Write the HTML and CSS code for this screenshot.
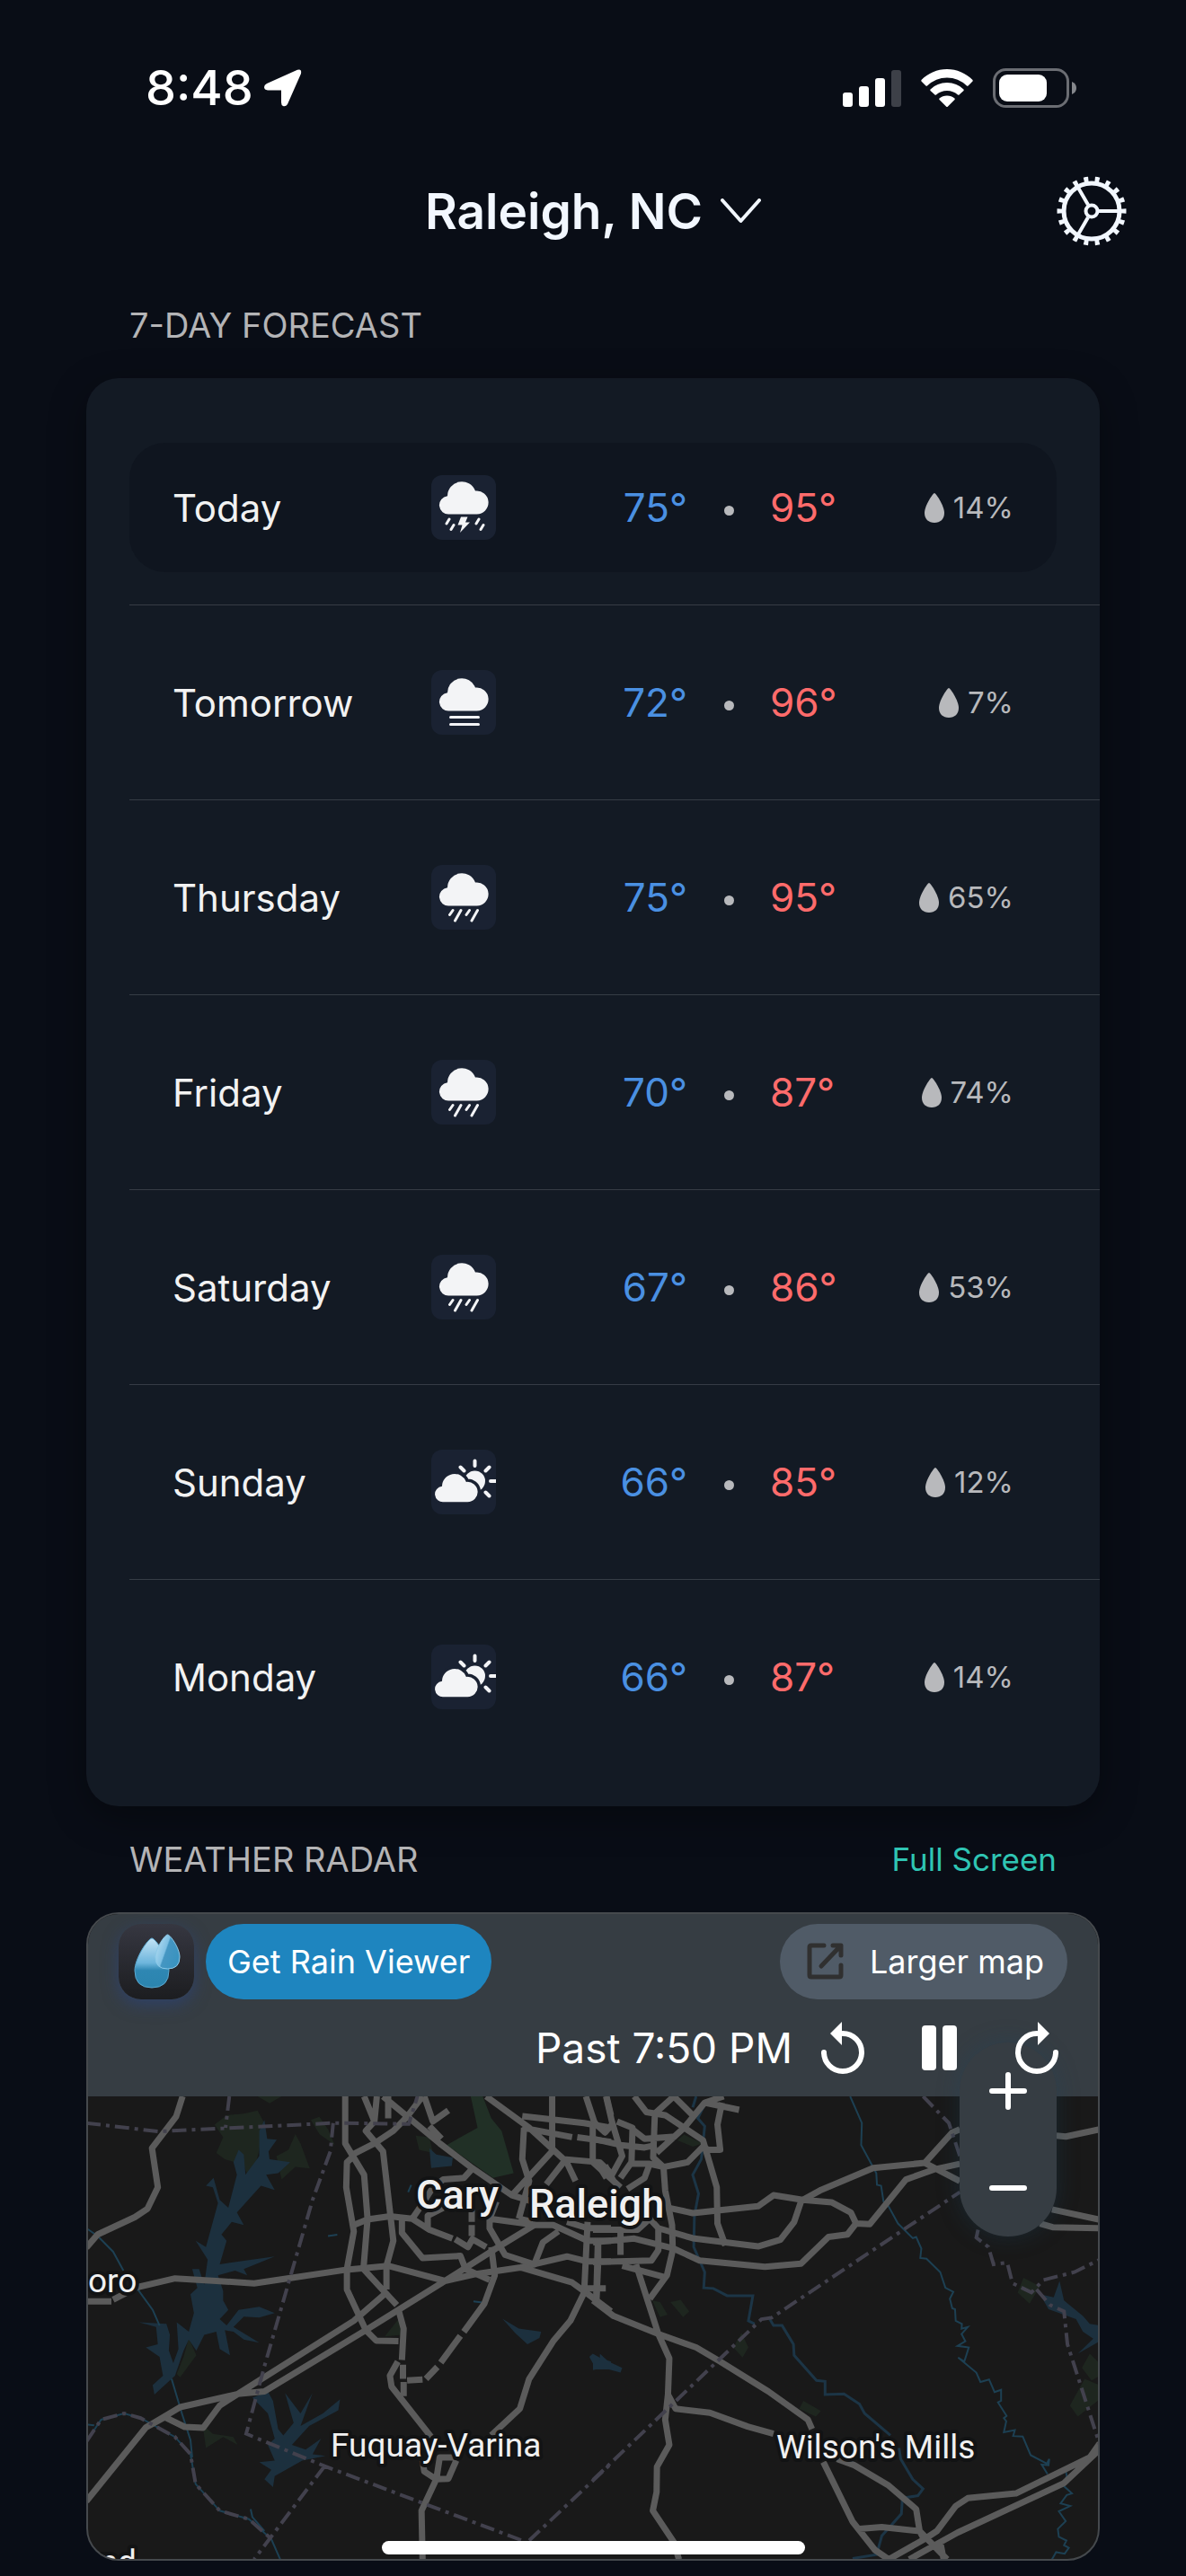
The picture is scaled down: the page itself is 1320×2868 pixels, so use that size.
FILE: index.html
```html
<!DOCTYPE html>
<html lang="en">
    <head>
        <meta charset="utf-8">
        <title>Weather</title>
        <meta name="viewport" content="width=device-width, initial-scale=1">
        <link rel="stylesheet" href="styles.css">
    </head>
    <body>
        <!-- shared shapes -->
        <svg class="defs" aria-hidden="true">
            <symbol id="cloud" viewBox="0 0 72 72">
                <path d="M20 43.5a10.2 10.2 0 0 1-2-20.3A16 16 0 0 1 49 17.6A13 13 0 1 1 50.5 43.5Z"/>
            </symbol>
            <symbol id="storm" viewBox="0 0 72 72">
                <use href="#cloud" width="72" height="72"/>
                <path class="line" d="M20 49l-3 5M25 55.500l-3 5M53 49l-3 5M58 55.500l-3 5"/>
                <path d="M33 46.500h7.500l-2.500 6h5L32 64l2.500-8.500H29.500Z"/>
            </symbol>
            <symbol id="fog" viewBox="0 0 72 72">
                <use href="#cloud" y="2" width="72" height="72"/>
                <path class="line" d="M21.500 52.500h31M21.500 60.500h31"/>
            </symbol>
            <symbol id="rain" viewBox="0 0 72 72">
                <use href="#cloud" y="2" width="72" height="72"/>
                <path class="line" d="M24 50.500l-3.500 5M33 50.500L26.500 62M42.500 50.500l-3.500 5M51.500 50.500L45 62"/>
            </symbol>
            <symbol id="partly" viewBox="0 0 72 72">
                <circle cx="48.500" cy="35" r="11.500"/>
                <path class="line thick" d="M48.500 12.500v5.500M60.500 23.500l4-4M36.500 23.500l-4-4M66 35h8M60.500 47.500l4 4"/>
                <g transform="translate(-3.700 20.800) scale(.87 .86)">
                    <path class="halo" d="M20 43.500a10.200 10.200 0 0 1-2-20.300A16 16 0 0 1 49 17.600A13 13 0 1 1 50.500 43.500Z"/>
                </g>
            </symbol>
            <symbol id="drop" viewBox="0 0 22 33">
                <path d="M11 0C12.500 0 22 14 22 22C22 29 17.500 33 11 33S0 29 0 22C0 14 9.500 0 11 0Z"/>
            </symbol>
        </svg>

        <div class="status-bar">
            <div class="clock">
                <span>8:48</span>
                <svg width="42" height="42" viewBox="0 0 42 42" fill="#fff"><path d="M37 .8Q42-1 41 5L26 39Q24 42 21 41Q19 40 19 37V23.500H4Q0 23 0 20Q0 17.500 3 16Z"/></svg>
            </div>
            <div class="indicators">
                <svg width="65" height="42" viewBox="0 0 65 42" fill="#fff">
                    <rect x="0" y="26" width="11" height="16" rx="3"/>
                    <rect x="18" y="19" width="11" height="23" rx="3"/>
                    <rect x="36" y="10" width="11" height="32" rx="3"/>
                    <rect x="54" y="1" width="11" height="41" rx="3" fill="#3d4048"/>
                </svg>
                <svg width="58" height="42" viewBox="0 0 58 42" fill="#fff">
                    <path d="M29 0C40 0 50 4.500 57.500 12Q58 13 57.500 13.500L52.500 18.500Q51.500 19 51 18.500Q41.500 9.500 29 9.500T7 18.500Q6.500 19 5.500 18.500L.5 13.500Q0 13 .5 12C8 4.500 18 0 29 0Z"/>
                    <path d="M29 15Q40 15 47.500 22.500Q48 23 47.500 24L42.500 28.500Q42 29 41 28.500Q36 24 29 24T17 28.500Q16 29 15.500 28.500L10.500 24Q10 23 10.500 22.500Q18 15 29 15Z"/>
                    <path d="M29 29.500Q34 29.500 37.500 32.500Q38 33.500 37.500 34L30 41.500Q29 42.500 28 41.500L20.500 34Q20 33.500 20.500 32.500Q24 29.500 29 29.500Z"/>
                </svg>
                <svg width="94" height="44" viewBox="0 0 94 44">
                    <rect x="1.500" y="1.500" width="82" height="41" rx="13" fill="none" stroke="#6b6d73" stroke-width="3"/>
                    <rect x="7" y="7" width="53" height="30" rx="9" fill="#fff"/>
                    <path d="M88 15Q93 17 93 22T88 29Z" fill="#85878c"/>
                </svg>
            </div>
        </div>

        <header class="top">
            <button class="location">
                Raleigh, NC
                <svg width="45" height="28" viewBox="0 0 45 28"><path d="M2 2l20.500 23L43 2" fill="none" stroke="#f2f7ff" stroke-width="4" stroke-linecap="round" stroke-linejoin="round"/></svg>
            </button>
            <button class="settings" aria-label="Settings">
                <svg width="78" height="78" viewBox="0 0 78 78" fill="none" stroke="#f2f7ff">
                    <circle cx="39" cy="39" r="31" stroke-width="5"/>
                    <circle cx="39" cy="39" r="35.500" stroke-width="6" pathLength="180" stroke-dasharray="4 6" stroke-dashoffset="2"/>
                    <circle cx="39" cy="39" r="6.500" stroke-width="4"/>
                    <path d="M47 39h22M35 32L24 13M35 46L24 65" stroke-width="4"/>
                </svg>
            </button>
        </header>

        <main>
            <div class="section-head">
                <h2>7-DAY FORECAST</h2>
            </div>
            <ul class="forecast">
                <li>
                    <div class="day today">
                        <span class="name">Today</span>
                        <svg class="icon"><use href="#storm"/></svg>
                        <span class="low">75°</span>
                        <span class="dot"></span>
                        <span class="high">95°</span>
                        <span class="chance"><svg><use href="#drop"/></svg>14%</span>
                    </div>
                </li>
                <li>
                    <div class="day">
                        <span class="name">Tomorrow</span>
                        <svg class="icon"><use href="#fog"/></svg>
                        <span class="low">72°</span>
                        <span class="dot"></span>
                        <span class="high">96°</span>
                        <span class="chance"><svg><use href="#drop"/></svg>7%</span>
                    </div>
                </li>
                <li>
                    <div class="day">
                        <span class="name">Thursday</span>
                        <svg class="icon"><use href="#rain"/></svg>
                        <span class="low">75°</span>
                        <span class="dot"></span>
                        <span class="high">95°</span>
                        <span class="chance"><svg><use href="#drop"/></svg>65%</span>
                    </div>
                </li>
                <li>
                    <div class="day">
                        <span class="name">Friday</span>
                        <svg class="icon"><use href="#rain"/></svg>
                        <span class="low">70°</span>
                        <span class="dot"></span>
                        <span class="high">87°</span>
                        <span class="chance"><svg><use href="#drop"/></svg>74%</span>
                    </div>
                </li>
                <li>
                    <div class="day">
                        <span class="name">Saturday</span>
                        <svg class="icon"><use href="#rain"/></svg>
                        <span class="low">67°</span>
                        <span class="dot"></span>
                        <span class="high">86°</span>
                        <span class="chance"><svg><use href="#drop"/></svg>53%</span>
                    </div>
                </li>
                <li>
                    <div class="day">
                        <span class="name">Sunday</span>
                        <svg class="icon"><use href="#partly"/></svg>
                        <span class="low">66°</span>
                        <span class="dot"></span>
                        <span class="high">85°</span>
                        <span class="chance"><svg><use href="#drop"/></svg>12%</span>
                    </div>
                </li>
                <li>
                    <div class="day">
                        <span class="name">Monday</span>
                        <svg class="icon"><use href="#partly"/></svg>
                        <span class="low">66°</span>
                        <span class="dot"></span>
                        <span class="high">87°</span>
                        <span class="chance"><svg><use href="#drop"/></svg>14%</span>
                    </div>
                </li>
            </ul>

            <div class="section-head">
                <h2>WEATHER RADAR</h2>
                <a class="full" href="#">Full Screen</a>
            </div>
            <div class="radar">
                <div class="radar-bar">
                    <div class="radar-links">
                        <svg class="logo" viewBox="0 0 84 84">
                            <defs>
                                <linearGradient id="tile" x2="0" y2="1"><stop offset="0" stop-color="#363741"/><stop offset="1" stop-color="#1c1d20"/></linearGradient>
                                <linearGradient id="water" x2="0" y2="1"><stop offset="0" stop-color="#c4e4f6"/><stop offset=".5" stop-color="#6db5dc"/><stop offset=".65" stop-color="#2e87b3"/><stop offset="1" stop-color="#2b84ae"/></linearGradient>
                                <linearGradient id="water2" x2="1" y2=".5"><stop offset="0" stop-color="#bfe2f5"/><stop offset=".5" stop-color="#7fc0e3"/><stop offset=".55" stop-color="#4596c2"/><stop offset="1" stop-color="#3a93c0"/></linearGradient>
                            </defs>
                            <rect width="84" height="84" rx="25" fill="url(#tile)"/>
                            <path d="M37 16C41 16 56 38 56 52Q56 71 37 71T18 52C18 38 33 16 37 16Z" fill="url(#water)" stroke="#5aa9d0"/>
                            <path d="M54.500 12C57.500 12 68 27 68 37Q68 50 54.500 50T41 37C41 27 51.500 12 54.500 12Z" fill="url(#water2)" stroke="#8cc9e8"/>
                        </svg>
                        <a class="pill get" href="#">Get Rain Viewer</a>
                        <a class="pill larger" href="#">
                            <svg width="42" height="42" viewBox="0 0 42 42" fill="none" stroke="#303030" stroke-width="5" stroke-linecap="round" stroke-linejoin="round"><path d="M19 3H5Q3 3 3 5V36Q3 38 5 38H36Q38 38 38 36V25M29 3H38V14M37 4L16 26"/></svg>
                            Larger map
                        </a>
                    </div>
                    <div class="player">
                        <span class="time">Past 7:50 PM</span>
                        <button aria-label="Back">
                            <svg width="48" height="58" viewBox="0 0 48 58"><path d="M24 13A21 21 0 1 1 3 34" fill="none" stroke="#fff" stroke-width="6" stroke-linecap="round"/><path d="M23 0V26L10 13Z" fill="#fff"/></svg>
                        </button>
                        <button aria-label="Pause">
                            <svg width="40" height="50" viewBox="0 0 40 50" fill="#fff"><rect width="16" height="50" rx="4"/><rect x="23" width="16" height="50" rx="4"/></svg>
                        </button>
                        <button aria-label="Forward">
                            <svg width="48" height="58" viewBox="0 0 48 58"><path d="M24 13A21 21 0 1 0 45 34" fill="none" stroke="#fff" stroke-width="6" stroke-linecap="round"/><path d="M25 0V26L38 13Z" fill="#fff"/></svg>
                        </button>
                    </div>
                </div>

                <svg class="map" viewBox="2 0 1124 515" preserveAspectRatio="xMidYMid slice">
                    <!-- west half -->
                    <g transform="translate(-16 -14) scale(.38265 .34949)">
                        <path class="park" d="M415 130L450 100L500 95L540 85L560 125L545 210L520 320L500 260L445 240L420 220L440 170ZM595 230L630 210L650 160L665 190L692 270L650 265L610 305ZM695 115L720 105L745 145L765 195L720 160ZM540 40L575 62L610 40ZM1000 165L1040 170L1050 220L1010 210ZM910 805L950 750L960 800ZM340 810L362 865L315 935L305 925L325 870ZM380 1085L410 1115L470 1125L482 1150L440 1125L390 1160Z"/>
                        <path class="park bright" d="M1160 40H1195L1220 110L1250 150L1285 285L1225 300L1090 195L1180 140Z"/>
                        <path class="lake" d="M560 115L568 175L596 178L572 215L575 240L635 250L600 285L565 290L590 338L550 325L480 410L500 450L465 440L435 480L450 500L430 575L590 550L500 590L510 610L475 595L425 610L440 660L440 690L455 720L430 750L450 770L485 720L545 710L590 730L545 745L500 742L470 775L545 825L500 815L470 790L445 785L460 865L430 845L420 790L385 800L362 850L340 815L325 850L300 930L240 990L235 960L265 930L255 870L215 840L250 830L245 775L195 760L275 765L285 800L282 850L295 890L310 845L305 760L340 790L355 730L345 670L365 650L350 590L370 590L385 640L395 560L360 500L390 520L425 380L410 330L390 325L412 300L430 370L455 395L480 290L470 250L485 210L500 225L505 290L545 230L545 150ZM525 1000L570 980L585 1010L600 1100L615 1120L645 1080L620 985L665 1050L700 985L665 1090L730 1050L780 1005L775 1040L690 1090L640 1150L680 1165L725 1130L700 1180L738 1185L670 1200L590 1250L585 1285L560 1260L580 1230L545 1205L590 1200L570 1150L590 1130L570 1050ZM1040 205L1060 225L1108 235L1105 262L1045 268ZM1252 748L1300 780L1365 790L1360 810L1325 830L1290 795ZM1505 870L1515 860L1540 875L1568 885V910L1525 910Z"/>
                        <path class="river" d="M42 460L75 485L120 535L150 595M185 645L235 720L255 770M290 940L320 1050L345 1135L350 1190M42 1085L65 1088M42 1140L85 1070L152 1050L200 1065L300 1125L345 1180L360 1275L430 1360L515 1387L580 1450L606 1515M520 1355L525 1380L560 1425M745 485L772 481M978 345L987 322M1168 693L1205 698"/>
                        <path class="road" d="M322 40L303 105L233 205L250 330L220 398L183 425L75 480L42 522M42 693H115M120 688L190 648L300 620L420 628L530 636L640 618L800 592L920 580L1085 628L1180 605L1305 585L1440 550L1500 566H1568M1305 585L1455 633L1495 665L1568 725M42 1330L215 1095L315 1030L483 988L560 980L855 785L1085 628L1240 520L1345 450M483 988L820 755L912 668M215 1095L270 1062L328 1093L382 1096L430 1025L483 988"/>
                        <path class="road" d="M795 40V190L850 290L860 430L848 590L945 705M850 40L880 120M820 230L800 250L798 330L820 470L800 590V655L855 785L885 818L950 820M812 228L880 190L935 150L975 105L1020 40M887 40L880 120L855 150L905 215L935 500L915 580V655M920 40V110M905 40L1070 190L1160 265L1280 355L1340 375M1025 40L1050 120L1095 85M1040 135L1075 175"/>
                        <path class="road" d="M1205 40L1330 140L1430 240L1535 250L1568 285M1397 40V215L1280 355M1430 250L1380 320M1310 103L1490 125L1568 140M1310 140L1455 170M1470 170L1568 185M1495 40L1525 140M1515 130V240M1555 40L1568 100M1315 140L1310 240L1330 310L1300 430M1435 240L1465 310M1530 255L1555 300"/>
                        <path class="road" d="M820 450L860 432L925 422L990 430L1040 465L1107 493M1115 495L1152 520L1165 495L1205 520M990 430L1015 390L1050 330L1080 305L1140 300L1165 270M1035 455V420L1080 395M960 430V475L1020 555L1130 548L1145 590L1215 625M1163 400V440M1163 450V485M1235 375L1215 430V460L1260 545L1345 575L1370 505L1415 470M1215 430L1350 450H1400L1500 500H1568M1340 440L1300 430M1440 440L1500 460H1568"/>
                        <path class="road" d="M1220 520L1230 610L1200 700L1140 790M1130 803L1073 888M1063 902L1030 940M1020 942L975 945M950 720L965 780L960 880M948 885L925 930L930 965L1045 1125M963 895V940M965 950V995M1500 440L1490 665L1450 755L1400 820L1330 940L1303 1035L1220 1120M1530 500L1525 690M1490 652H1553"/>
                        <path class="road" d="M1020 1200L1025 1235L1060 1260L1095 1258L1118 1200M1110 1190L1070 1190L1060 1260L1017 1360L1020 1515"/>
                        <path class="border" d="M42 125L250 152L760 125L980 128L1005 40M458 40L447 140M760 125L752 215L700 370L560 900L507 1115L735 1218L1310 1455M735 1218L530 1515M1330 1455L1568 1210M42 1140L85 1070L152 1050L200 1065L300 1125L345 1180L360 1275L430 1360L515 1387L580 1450"/>
                    </g>
                    <!-- east half -->
                    <g transform="translate(564 -14) scale(.38265 .34949)">
                        <path class="park" d="M245 180L265 162L320 190L290 200ZM172 690L195 695L217 735L195 743ZM225 695L255 688L280 725L262 743ZM432 793L452 840L435 872L408 840ZM612 1010L663 1042L648 1060L600 1035ZM1252 618L1300 645L1270 700L1235 665ZM1445 860L1474 890V930L1450 945L1422 905ZM1430 940L1474 960V1005L1410 1060L1387 1025Z"/>
                        <path class="lake" d="M1357 628L1370 690L1425 740L1445 765L1474 770V820L1410 860L1455 812L1425 790L1405 750L1325 718L1300 670L1340 680ZM0 882H20V860L45 885L85 905L80 920L30 905L0 912Z"/>
                        <path class="river wide" d="M300 40L290 75M325 65L305 110L325 135L315 240L290 290L307 350L295 420L293 520L325 600L322 650L350 652L390 675L465 675L452 755L470 765M510 742L525 770L550 770L583 830L585 865L650 945L675 948V990L730 988L775 1020L790 1050L865 1120M890 1160L895 1195L930 1260L960 1290L945 1312L900 1320L897 1370L840 1440L825 1500L755 1512"/>
                        <path class="river" d="M748 40L782 125L780 195L824 285L826 322L838 325L845 375L857 385L887 445L930 492L940 488L955 525L952 555L970 557L1010 600L1025 650L1048 663L1038 685L1045 715L1053 718L1055 755L1073 765L1072 780L1090 775L1072 797L1083 820L1060 835L1093 840L1080 885L1062 872L1115 920L1127 950L1152 942L1168 982L1187 975V1010L1178 1015L1203 1058L1195 1065L1202 1075L1195 1110L1227 1103L1222 1122L1250 1124L1273 1183L1320 1210L1327 1195L1325 1215L1305 1213L1322 1243M1373 1220L1378 1250L1368 1280L1393 1305L1378 1310L1360 1337L1388 1345L1355 1362L1375 1393L1352 1418L1355 1443L1377 1455L1370 1470L1384 1478L1372 1497L1347 1492L1335 1515"/>
                        <path class="road" d="M0 690L60 740L190 797L300 840L370 885L510 980L625 1070L637 1100M125 575L190 797L222 875L218 990L210 1070L222 1150L186 1220L185 1300L174 1360L235 1460L250 1515M218 990L240 1035L340 1048L450 1092L525 1115M670 1205L755 1395L820 1485L860 1515M710 1195L760 1215L860 1280L940 1355L950 1425L1030 1515M775 1418L840 1412L950 1425L965 1455M860 1515L965 1450L1000 1425L1055 1345L1090 1320L1230 1305L1445 1190L1474 1145M920 1515L1060 1430L1370 1272L1474 1165M1010 1460L1020 1515"/>
                        <path class="road" d="M120 40L155 90L210 100L320 180L360 330L362 445L385 515M235 40L180 95L175 235L205 265L210 340L230 450L232 530L215 610L165 685M235 40L290 100M380 40L325 60L265 140L185 220M325 60L425 83M375 60L362 130L370 210H335L320 200L275 250L205 265L165 255H110M0 175L80 195L150 203L185 195M38 40L55 120L85 230L50 300M70 120L115 140L112 250L80 300M115 145L150 175L240 168M0 120L35 155L55 130M165 255L150 300L100 335M0 250L80 330M35 260L60 310"/>
                        <path class="road" d="M220 395L290 412L480 390L525 355L610 370L695 378L750 410L765 445L805 447L910 305L995 272L1067 255M610 370L660 340L815 268L965 252L1045 155L1067 145M965 252L1067 310M605 375L585 440L545 497L480 518L290 492L190 460M765 445L740 480L685 488L605 573L500 583L310 563L235 525L120 493L0 505M0 465H130L165 430L190 460V530L170 563L0 568M80 465V545M15 510V570L10 690M85 580L205 615M1348 165L1375 168L1474 145M1335 400L1474 433M1300 445L1337 457L1474 460"/>
                        <path class="border" d="M0 1262L490 750L520 745L1067 345M960 40L1035 125L1067 230M1120 465L1115 490L1150 520L1165 575L1205 570L1220 635L1275 665L1310 625L1400 600L1474 560M1290 655L1330 705L1370 725L1380 830L1474 1150"/>
                    </g>
                    <g class="places">
                        <text class="city" x="367" y="125">Cary</text>
                        <text class="city" x="493" y="135">Raleigh</text>
                        <text x="272" y="401">Fuquay-Varina</text>
                        <text x="768" y="403">Wilson's Mills</text>
                        <text x="2" y="218">oro</text>
                        <text x="56" y="531" text-anchor="end">nd</text>
                    </g>
                </svg>

                <div class="zoom">
                    <button aria-label="Zoom in"><svg width="42" height="42" viewBox="0 0 42 42"><path d="M21 3V39M3 21H39" stroke="#fff" stroke-width="6" stroke-linecap="round"/></svg></button>
                    <button aria-label="Zoom out"><svg width="42" height="42" viewBox="0 0 42 42"><path d="M3 21H39" stroke="#fff" stroke-width="6" stroke-linecap="round"/></svg></button>
                </div>
            </div>
        </main>
        <div class="home-bar"></div>
    </body>
</html>
```
FILE: styles.css
```css
* {
    box-sizing: border-box;
}
body {
    position: relative;
    margin: 0;
    padding-bottom: 17px;
    background-color: #090d16;
    color: #f2f2f2;
    font-family: Inter, "Liberation Sans", sans-serif;
}
svg {
    display: block;
    flex: none;
}
button {
    margin: 0;
    padding: 0;
    border: none;
    background: none;
    color: inherit;
    font: inherit;
}
a {
    color: inherit;
    text-decoration: none;
}
.defs {
    position: absolute;
    width: 0;
    height: 0;
}

/* status bar */
.status-bar {
    display: flex;
    justify-content: space-between;
    align-items: center;
    height: 167px;
    padding: 28px 121px 0 162px;
}
.clock {
    display: flex;
    align-items: center;
    gap: 12px;
    color: #fff;
    font-size: 54px;
    font-weight: 500;
}
.indicators {
    display: flex;
    align-items: center;
    gap: 22px;
}

/* header */
.top {
    display: grid;
    grid-template-columns: 1fr auto 1fr;
    align-items: center;
    height: 136px;
    padding: 0 66px;
}
.location {
    grid-column: 2;
    display: flex;
    align-items: center;
    gap: 20px;
    color: #f2f7ff;
    font-size: 55px;
    font-weight: 600;
}
.settings {
    justify-self: end;
}

main {
    padding: 0 96px;
}
.section-head {
    display: flex;
    justify-content: space-between;
    align-items: center;
    height: 118px;
    padding: 0 48px;
}
h2 {
    margin: 0;
    color: #b4b4b6;
    font-size: 38px;
    font-weight: 400;
}
.full {
    color: #2fc5b4;
    font-size: 35px;
}

/* forecast */
.forecast {
    margin: 0;
    padding: 36px 0 36px 48px;
    list-style: none;
    background-color: #131a24;
    border-radius: 36px;
    box-shadow: 0 12px 40px rgba(0,0,0,0.35);
}
.forecast li {
    padding: 36px 48px 36px 0;
}
.forecast li + li {
    border-top: 1px solid #363c45;
}
.day {
    display: grid;
    grid-template-columns: 288px 72px 213px 92px 1fr auto;
    align-items: center;
    height: 144px;
    padding: 0 48px;
    border-radius: 40px;
    font-size: 44px;
}
.today {
    background-color: #0f151f;
}
.name {
    font-size: 42px;
}
.icon {
    width: 72px;
    height: 72px;
    border-radius: 12px;
    background-color: #1a2232;
    fill: #f3f4f6;
}
.line {
    fill: none;
    stroke: #f3f4f6;
    stroke-width: 3;
    stroke-linecap: round;
}
.thick {
    stroke-width: 4;
}
.halo {
    stroke: #1a2232;
    stroke-width: 8;
    paint-order: stroke;
}
.low {
    color: #4a90e2;
    text-align: right;
}
.high {
    color: #ff6b6b;
}
.dot {
    justify-self: center;
    width: 11px;
    height: 11px;
    margin-top: 6px;
    border-radius: 50%;
    background-color: #b8b9bc;
}
.chance {
    display: flex;
    align-items: center;
    gap: 10px;
    color: #b8b9bc;
    font-size: 33px;
}
.chance svg {
    width: 22px;
    height: 33px;
    fill: #b8b9bc;
}

/* radar */
.radar {
    position: relative;
    overflow: hidden;
    border: 2px solid #45494d;
    border-radius: 36px;
    background-color: #191919;
}
.radar-bar {
    height: 203px;
    padding: 11px 34px 0;
    background-color: #363d43;
    color: #fff;
}
.radar-links {
    display: flex;
}
.logo {
    width: 84px;
    height: 84px;
    margin-right: 13px;
    border-radius: 25px;
    box-shadow: 0 6px 18px rgba(40,70,140,0.5);
}
.pill {
    display: flex;
    align-items: center;
    height: 84px;
    border-radius: 42px;
    font-size: 36px;
}
.get {
    padding: 0 24px;
    background-color: #1e85bf;
}
.larger {
    gap: 28px;
    margin-left: auto;
    padding: 0 26px 0 30px;
    background-color: #505b67;
}
.player {
    position: relative;
    z-index: 1;
    display: flex;
    justify-content: flex-end;
    align-items: center;
    height: 108px;
    padding-right: 10px;
}
.player button {
    margin-left: 64px;
}
.time {
    margin-right: -32px;
    font-size: 46px;
}
.map {
    width: 100%;
    height: 515px;
}
.map path {
    vector-effect: non-scaling-stroke;
}
.park {
    fill: #1e261f;
}
.bright {
    fill: #213026;
}
.lake {
    fill: #1c303e;
}
.river {
    fill: none;
    stroke: #1d4053;
    stroke-width: 2;
}
.wide {
    stroke: #1c3546;
    stroke-width: 3;
}
.road {
    fill: none;
    stroke: #5b5b5b;
    stroke-width: 7;
    stroke-linejoin: round;
}
.border {
    fill: none;
    stroke: #42414d;
    stroke-width: 4;
    stroke-dasharray: 16 6 4 6;
}
.places {
    fill: #f0f0f0;
    stroke: #121314;
    stroke-width: 8;
    stroke-linejoin: round;
    paint-order: stroke;
    font-family: Roboto, sans-serif;
    font-size: 37px;
}
.city {
    font-size: 45px;
    font-weight: 500;
}
.zoom {
    position: absolute;
    right: 46px;
    bottom: 359px;
    display: flex;
    flex-direction: column;
    border-radius: 54px;
    background-color: #363d43;
    box-shadow: 0 0 24px rgba(30,70,95,0.35);
}
.zoom button {
    display: grid;
    place-items: center;
    width: 108px;
    height: 108px;
}
.home-bar {
    position: absolute;
    left: 50%;
    bottom: 24px;
    width: 471px;
    height: 15px;
    margin-left: -235px;
    border-radius: 8px;
    background-color: #fff;
}
```
